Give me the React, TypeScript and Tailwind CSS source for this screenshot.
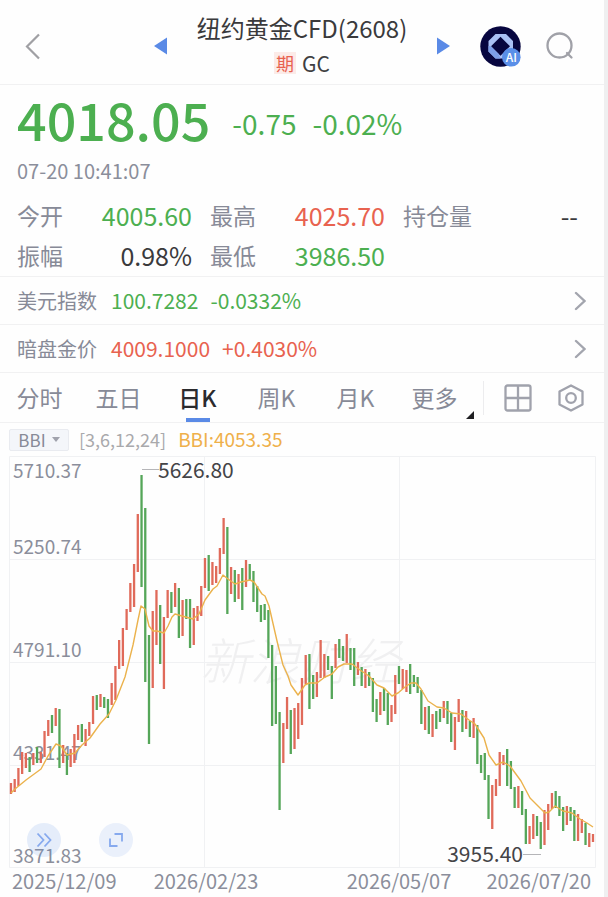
import clsx from 'clsx';

type Tone = 'up' | 'down' | 'flat';
// [direction, top, bottom] in chart units
type Bar = ['u' | 'd', number, number];

const TONE_CLASS: Record<Tone, string> = {
  up: 'text-[#e8624f]',
  down: 'text-[#4caf50]',
  flat: 'text-[#3a3a3c]',
};

const STATS: { label: string; value: string; tone: Tone }[] = [
  { label: '今开', value: '4005.60', tone: 'down' },
  { label: '最高', value: '4025.70', tone: 'up' },
  { label: '持仓量', value: '--', tone: 'flat' },
  { label: '振幅', value: '0.98%', tone: 'flat' },
  { label: '最低', value: '3986.50', tone: 'down' },
];

const RELATED: { label: string; price: string; change: string; tone: Tone }[] = [
  { label: '美元指数', price: '100.7282', change: '-0.0332%', tone: 'down' },
  { label: '暗盘金价', price: '4009.1000', change: '+0.4030%', tone: 'up' },
];

const TABS = ['分时', '五日', '日K', '周K', '月K', '更多'];

const BARS: Bar[] = [
  ['u', 783, 794], ['u', 779, 792], ['u', 768, 786], ['u', 752, 774], ['u', 753, 768],
  ['d', 757, 772], ['u', 753, 765], ['d', 747, 763], ['u', 752, 763], ['u', 731, 757],
  ['u', 720, 736], ['d', 715, 733], ['u', 708, 726], ['d', 709, 768], ['u', 745, 763],
  ['d', 753, 775], ['u', 749, 767], ['u', 734, 763], ['u', 725, 740], ['d', 724, 742],
  ['u', 729, 746], ['u', 722, 736], ['u', 696, 724], ['d', 695, 710], ['u', 694, 707],
  ['d', 697, 708], ['d', 699, 718], ['u', 683, 705], ['u', 666, 700], ['u', 640, 669],
  ['u', 628, 666], ['u', 609, 630], ['u', 583, 612], ['u', 564, 607], ['u', 514, 572],
  ['d', 475, 587], ['d', 508, 682], ['d', 635, 744], ['u', 611, 688], ['u', 590, 645],
  ['d', 605, 664], ['u', 617, 689], ['u', 590, 618], ['d', 592, 613], ['u', 583, 607],
  ['d', 588, 638], ['u', 600, 636], ['d', 599, 619], ['d', 599, 648], ['u', 608, 645],
  ['u', 606, 621], ['u', 586, 616], ['u', 558, 588], ['d', 555, 591], ['u', 562, 585],
  ['u', 566, 583], ['u', 548, 574], ['u', 518, 554], ['d', 527, 614], ['u', 567, 594],
  ['d', 570, 602], ['u', 574, 599], ['d', 568, 610], ['u', 560, 587], ['d', 564, 580],
  ['d', 571, 602], ['d', 586, 612], ['d', 605, 622], ['d', 604, 620], ['d', 610, 658],
  ['d', 645, 726], ['d', 666, 724], ['d', 712, 810], ['u', 723, 763], ['u', 697, 729],
  ['d', 710, 754], ['u', 708, 749], ['u', 703, 739], ['u', 678, 725], ['u', 655, 684],
  ['d', 654, 709], ['d', 675, 699], ['u', 672, 697], ['u', 640, 678], ['u', 654, 678],
  ['d', 656, 670], ['d', 666, 699], ['u', 644, 668], ['d', 639, 658], ['d', 646, 661],
  ['u', 634, 663], ['d', 648, 670], ['d', 648, 686], ['u', 662, 675], ['d', 667, 686],
  ['u', 669, 688], ['d', 672, 686], ['d', 678, 712], ['d', 699, 722], ['u', 692, 715],
  ['d', 688, 711], ['d', 693, 725], ['u', 705, 722], ['u', 675, 714], ['d', 666, 684],
  ['u', 669, 689], ['u', 670, 692], ['d', 664, 694], ['d', 675, 687], ['d', 677, 693],
  ['d', 690, 724], ['u', 707, 730], ['d', 706, 734], ['u', 714, 737], ['d', 711, 729],
  ['d', 709, 722], ['u', 701, 718], ['d', 701, 724], ['d', 713, 742], ['u', 717, 750],
  ['u', 699, 722], ['d', 710, 732], ['u', 711, 729], ['d', 721, 737], ['u', 718, 738],
  ['d', 725, 764], ['d', 755, 773], ['d', 753, 780], ['d', 775, 819], ['u', 785, 829],
  ['u', 779, 796], ['u', 752, 786], ['u', 755, 765], ['d', 749, 786], ['d', 761, 789],
  ['d', 787, 808], ['u', 786, 808], ['d', 791, 815], ['d', 809, 844], ['u', 826, 844],
  ['u', 814, 839], ['d', 816, 836], ['d', 822, 849], ['u', 810, 845], ['u', 804, 830],
  ['u', 793, 809], ['d', 791, 808], ['d', 796, 816], ['d', 807, 831], ['u', 806, 825],
  ['d', 807, 821], ['d', 810, 841], ['u', 814, 841], ['u', 819, 833], ['d', 823, 845],
  ['u', 833, 847], ['u', 834, 842],
];

const BBI_LINE =
  '11,793 15,789 26,780 41,769 48,756 56,744 61,746 67,755 75,753 82,745 90,738 100,724 109,714 116,700 125,677 ' +
  '133,645 138,620 141,606 145,609 149,626 153,631 157,631 164,633 168,626 172,617 175,614 182,616 193,619 ' +
  '199,614 205,600 213,589 217,586 223,575 228,579 235,584 241,582 250,580 254,582 262,594 265,596 269,606 ' +
  '277,641 283,665 288,676 291,685 298,695 305,685 309,683 317,683 325,677 332,674 338,667 344,664 352,664 ' +
  '360,670 369,676 377,685 384,688 392,696 398,693 405,687 411,683 416,683 421,689 428,701 437,707 444,708 ' +
  '452,713 461,714 469,720 475,724 484,738 489,755 496,765 503,762 510,766 521,781 530,798 537,805 545,813 ' +
  '549,812 555,806 563,811 572,813 580,819 587,823 593,827';

const PRICE_LABELS = [
  { text: '5710.37', y: 478 },
  { text: '5250.74', y: 554 },
  { text: '4791.10', y: 657 },
  { text: '4331.47', y: 760 },
  { text: '3871.83', y: 863 },
];

const DATE_LABELS = [
  { text: '2025/12/09', x: 12, anchor: 'start' },
  { text: '2026/02/23', x: 206, anchor: 'middle' },
  { text: '2026/05/07', x: 399, anchor: 'middle' },
  { text: '2026/07/20', x: 591, anchor: 'end' },
] as const;

function Header() {
  return (
    <header className="grid h-[85px] grid-cols-[1fr_auto_1fr] items-center border-b border-[#f1f1f2] pt-2">
      <button type="button" aria-label="返回" className="ml-[25px] justify-self-start">
        <svg width="15" height="27" viewBox="0 0 15 27" fill="none" stroke="#a0a0a4" strokeWidth="2.2">
          <path d="M14 1.5 2 13.5 14 25.5" />
        </svg>
      </button>
      <div className="flex w-[296px] items-center justify-between">
        <button type="button" aria-label="上一个">
          <svg width="13" height="18" viewBox="0 0 13 18" fill="#5a8ae6">
            <path d="M13 .5v17L0 9z" />
          </svg>
        </button>
        <div className="flex flex-col items-center">
          <h1 className="text-[24px] leading-[34px] whitespace-nowrap text-[#3a3a3c]">纽约黄金CFD(2608)</h1>
          <p className="flex items-center gap-[6px] text-[21px] leading-[36px] text-[#3f3f42]">
            <span className="bg-[#fcebe8] px-[2px] text-[18px] leading-[22px] text-[#e8624f]">期</span>
            GC
          </p>
        </div>
        <button type="button" aria-label="下一个">
          <svg width="13" height="18" viewBox="0 0 13 18" fill="#5a8ae6">
            <path d="M0 .5v17L13 9z" />
          </svg>
        </button>
      </div>
      <div className="mr-[30px] flex items-center gap-[25px] justify-self-end">
        <button type="button" aria-label="AI">
          <svg width="41" height="41" viewBox="0 0 41 41">
            <circle cx="20.5" cy="20.5" r="20.2" fill="#07063f" />
            <path
              fillRule="evenodd"
              fill="#a9c0f5"
              d="M15.5 8H26l7 7v10.5l-7 7H15.5l-7-7V15zM20.5 10.8 11 20.3l9.5 9.5 9.5-9.5z"
            />
            <path d="M8.5 20v5.5l7 7h5l-2-4.7-7.5-7.5z" fill="#7d9fe9" />
            <circle cx="31.3" cy="31.3" r="9.3" fill="#5a8fe8" />
            <text x="31.3" y="35.5" textAnchor="middle" fontSize="12" fontWeight="500" fill="#fff">
              AI
            </text>
          </svg>
        </button>
        <button type="button" aria-label="搜索">
          <svg width="28" height="28" viewBox="0 0 28 28" fill="none" stroke="#a0a1a8" strokeWidth="2.3">
            <circle cx="13.5" cy="13.5" r="12" />
            <path d="m21 21 4.5 4.5" strokeLinecap="round" />
          </svg>
        </button>
      </div>
    </header>
  );
}

function Quote() {
  return (
    <section className="border-b border-[#f1f1f2] pr-[26px] pb-px pl-[17px]">
      <div className="flex items-start pt-1 text-[#4caf50]">
        <strong className="text-[52px] leading-[60px] font-medium">4018.05</strong>
        <div className="ml-[22px] flex gap-4 text-[28px] leading-[68px]">
          <span>-0.75</span>
          <span>-0.02%</span>
        </div>
      </div>
      <time className="block text-[20px] leading-[28px] text-[#8b8e9b]">07-20 10:41:07</time>
      <dl className="mt-[10px] grid grid-cols-3 gap-x-[18px] text-[23px] leading-[40px]">
        {STATS.map((s) => (
          <div key={s.label} className="flex justify-between">
            <dt className="text-[#878a97]">{s.label}</dt>
            <dd className={clsx('text-[25px]', TONE_CLASS[s.tone])}>{s.value}</dd>
          </div>
        ))}
      </dl>
    </section>
  );
}

function RelatedRow({ label, price, change, tone }: (typeof RELATED)[number]) {
  return (
    <a
      href="#"
      className="flex h-[48px] items-center border-b border-[#f1f1f2] pr-[18px] pl-[17px] text-[20px]"
    >
      <span className="w-[94px] text-[#878a97]">{label}</span>
      <span className={clsx('flex gap-3 text-[21px]', TONE_CLASS[tone])}>
        <span>{price}</span>
        <span>{change}</span>
      </span>
      <svg
        className="ml-auto"
        width="12"
        height="20"
        viewBox="0 0 12 20"
        fill="none"
        stroke="#a3a5ae"
        strokeWidth="2.4"
        strokeLinecap="round"
      >
        <path d="m2 2 8.5 8L2 18" />
      </svg>
    </a>
  );
}

function Tabs() {
  return (
    <nav className="flex h-[50px] items-center border-b border-[#f1f1f2]">
      <div className="grid h-full w-[474px] grid-cols-6 text-[23px]">
        {TABS.map((tab) => {
          const active = tab === '日K';
          return (
            <button
              key={tab}
              type="button"
              className={clsx('relative', active ? 'font-medium text-[#2b2b2e]' : 'text-[#878a97]')}
            >
              {tab}
              {active && (
                <span className="absolute bottom-0 left-1/2 h-[4px] w-6 -translate-x-1/2 bg-[#5a8ae6]" />
              )}
              {tab === '更多' && (
                <svg className="absolute right-0 bottom-[3px]" width="8" height="8" viewBox="0 0 8 8">
                  <path d="M8 0v8H0z" fill="#1f1f22" />
                </svg>
              )}
            </button>
          );
        })}
      </div>
      <span className="ml-[9px] h-[34px] w-px bg-[#ececee]" />
      <div className="mx-auto flex items-center gap-[26px]">
        <button type="button" aria-label="多图">
          <svg width="28" height="28" viewBox="0 0 28 28" fill="none" stroke="#a0a2ac" strokeWidth="2.3">
            <rect x="1.5" y="1.5" width="25" height="25" rx="2" />
            <path d="M14 1.5v25M1.5 14h25" />
          </svg>
        </button>
        <button type="button" aria-label="设置">
          <svg width="26" height="28" viewBox="0 0 26 28" fill="none" stroke="#a0a2ac" strokeWidth="2.3">
            <path d="M13 1.5 24.5 7.6v12.8L13 26.5 1.5 20.4V7.6z" strokeLinejoin="round" />
            <circle cx="13" cy="14" r="4.8" />
          </svg>
        </button>
      </div>
    </nav>
  );
}

function Chart() {
  return (
    <div className="relative">
      <svg className="block w-full overflow-visible" viewBox="0 456 604 441" fontSize="19">
        <g stroke="#f0f1f3" strokeWidth="1" fill="none">
          <path d="M9.5 456.5h586v411h-586z" />
          <path d="M9.5 559.5h586M9.5 662.5h586M9.5 765.5h586M204.5 456.5v411M399.5 456.5v411" />
        </g>
        <text x="200" y="680" fontSize="50" fontStyle="italic" fontWeight="300" fill="#f0f0f1">
          新浪财经
        </text>
        <g fill="#8b8e9b">
          {PRICE_LABELS.map((l) => (
            <text key={l.text} x="13" y={l.y}>
              {l.text}
            </text>
          ))}
          {DATE_LABELS.map((l) => (
            <text key={l.text} x={l.x} y="889" fontSize="20" textAnchor={l.anchor}>
              {l.text}
            </text>
          ))}
        </g>
        {BARS.map(([dir, top, bottom], i) => (
          <rect
            key={i}
            x={9.8 + i * 3.731}
            y={top}
            width="2.3"
            height={bottom - top}
            fill={dir === 'u' ? '#e06a5a' : '#55a659'}
          />
        ))}
        <polyline points={BBI_LINE} fill="none" stroke="#ebb24c" strokeWidth="1.4" strokeLinejoin="round" />
        <path d="M142 469.5h17M523 854.5h18" stroke="#b5b5b8" />
        <g fill="#444447" fontSize="21">
          <text x="158" y="478">
            5626.80
          </text>
          <text x="523" y="862" textAnchor="end">
            3955.40
          </text>
        </g>
      </svg>
      <button
        type="button"
        aria-label="快进"
        className="absolute bottom-[40px] left-[27px] flex size-[34px] items-center justify-center rounded-full bg-[#5a8ae6]/15"
      >
        <svg width="16" height="16" viewBox="0 0 16 16" fill="none" stroke="#86a9ee" strokeWidth="1.8">
          <path d="m1.5 1.5 6 6.5-6 6.5M8.5 1.5l6 6.5-6 6.5" />
        </svg>
      </button>
      <button
        type="button"
        aria-label="全屏"
        className="absolute bottom-[40px] left-[99px] flex size-[34px] items-center justify-center rounded-full bg-[#5a8ae6]/12"
      >
        <svg width="16" height="16" viewBox="0 0 16 16" fill="none" stroke="#86a9ee" strokeWidth="1.8">
          <path d="M6.5 2H14v7.5M2 6.5V14h7.5" />
        </svg>
      </button>
    </div>
  );
}

export default function App() {
  return (
    <div className="bg-[#efeff0] pr-1 font-['Noto_Sans_CJK_SC',sans-serif]">
      <main className="bg-[#fefefe]">
        <Header />
        <Quote />
        {RELATED.map((r) => (
          <RelatedRow key={r.label} {...r} />
        ))}
        <Tabs />
        <div className="flex h-[33px] items-center">
          <button
            type="button"
            className="ml-[9px] flex h-[22px] w-[60px] items-center justify-center gap-[6px] rounded-[2px] border border-[#e9ebf0] bg-[#f4f6fa] text-[17px] text-[#878a97]"
          >
            BBI
            <svg width="8" height="5" viewBox="0 0 8 5">
              <path d="M0 0h8L4 5z" fill="#a0a2ac" />
            </svg>
          </button>
          <span className="ml-[10px] text-[18px] text-[#a9a9ac]">[3,6,12,24]</span>
          <span className="ml-3 text-[19px] text-[#efb04a]">BBI:4053.35</span>
        </div>
        <Chart />
      </main>
    </div>
  );
}
